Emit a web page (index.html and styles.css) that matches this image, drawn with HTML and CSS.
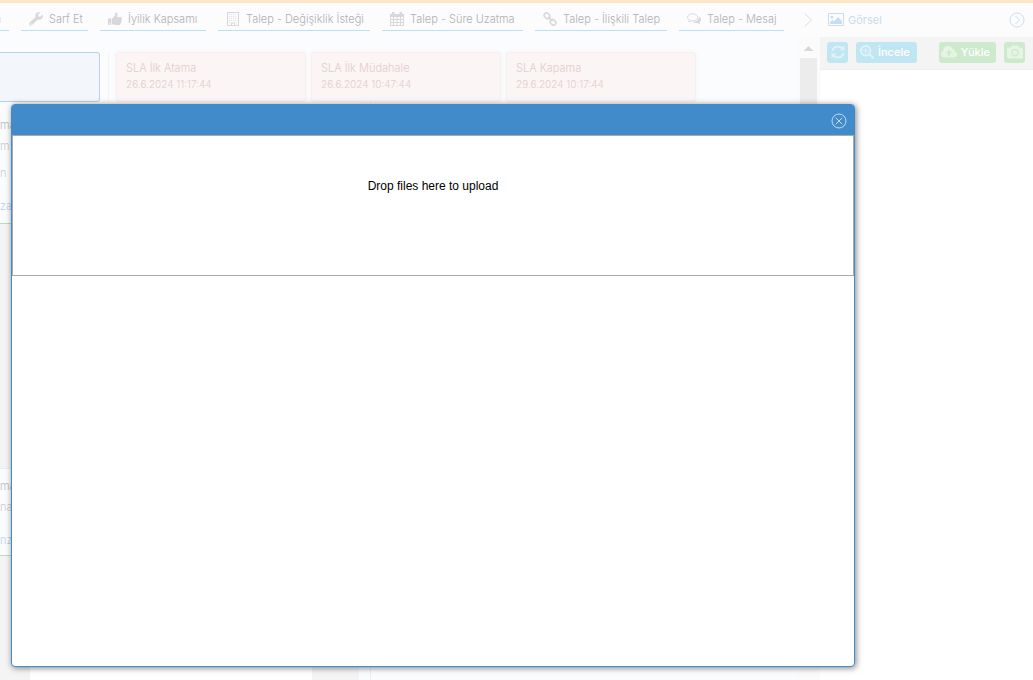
FILE: index.html
```html
<!DOCTYPE html>
<html lang="tr">
<head>
<meta charset="utf-8">
<title>Talep</title>
<link rel="stylesheet" href="styles.css">
</head>
<body>
<div class="app">
  <main class="work">
    <nav class="tabs">
      <a class="tab tab-cut" href="#">a</a>
      <a class="tab w-sarf" href="#"><svg class="icon" viewBox="0 0 14 14"><path fill-rule="evenodd" d="M13.5 2.5 11.3 4.8 9.4 4.5 9.1 2.7 11.3.5C9.6-.2 7.6.4 6.8 2c-.5 1-.5 2-.1 3L.7 10.6c-.9.9-.9 1.8-.3 2.5.8.8 1.9.7 2.6 0L8.800 7.400c1.300.6 2.900.3 3.900-.7 1.200-1.200 1.400-2.800.8-4.200zM2 11.300a.7.7 0 1 1 0 1.400.7.7 0 0 1 0-1.400z"/></svg>Sarf Et</a>
      <a class="tab w-iyilik" href="#"><svg class="icon" viewBox="0 0 14 14"><path fill-rule="evenodd" d="M0 6.500h3.300v6.300H0zM1.200 10.800v1h1v-1zM4 6.500C5.500 6 6.700 3.900 7 2.500L7.600.6C9.800.4 9.900 2.500 8.900 5h3.700c1.400.2 1.700 1.500.9 2.300.6.8.3 1.600-.3 2 .4.800.1 1.500-.6 1.900.1 1.200-.7 1.700-1.800 1.700H8.200C6.500 12.900 5.200 12.400 4 12.200z"/></svg>İyilik Kapsamı</a>
      <a class="tab w-degisiklik" href="#"><svg class="icon" viewBox="0 0 14 14"><path class="line" d="M1.500 0v13.500h11V0M1.500.5h11M5.500 13v-2h3v2"/><path class="dots" d="M3 2.500h8M3 4.500h8M3 6.500h8M3 8.500h8M3 10.500h1M10 10.500h1"/></svg>Talep - Değişiklik İsteği</a>
      <a class="tab w-sure" href="#"><svg class="icon" viewBox="0 0 14 14"><path fill-rule="evenodd" d="M0 2h2V0h2.500v2h5V0H12v2h2v12H0zM1 5v2h2V5zm3 0v2h2.500V5zm3.500 0v2H10V5zM11 5v2h2V5zM1 8v2h2V8zm3 0v2h2.500V8zm3.500 0v2H10V8zM11 8v2h2V8zM1 11v2h2v-2zm3 0v2h2.500v-2zm3.500 0v2H10v-2zm3.500 0v2h2v-2z"/></svg>Talep - Süre Uzatma</a>
      <a class="tab w-iliski" href="#"><svg class="icon" viewBox="0 0 14 14"><g class="line thick"><rect x="1" y="1.500" width="6" height="4.600" rx="2" transform="rotate(45 4 3.800)"/><rect x="7" y="8" width="6" height="4.600" rx="2" transform="rotate(45 10 10.300)"/><path d="m5 4.800 4.400 4.400"/></g></svg>Talep - İlişkili Talep</a>
      <a class="tab w-mesaj" href="#"><svg class="icon" viewBox="0 0 14 14"><path class="line" d="M5.500 1.800c-2.800 0-5 1.500-5 3.500 0 1.200.8 2.200 2 2.900L1.700 10l2.500-1.300c3.500.5 6.500-1 6.500-3.400 0-2-2.400-3.500-5.200-3.500z"/><path d="M12 4.500c2.500 1.500 2.600 4.100.3 5.700l1.200 2-3-1.300c-2 .4-3.800 0-4.900-1C9.500 9.800 12 7.800 12 4.500z"/></svg>Talep - Mesaj</a>
      <button class="next" aria-label="İleri"><svg viewBox="0 0 8 14"><path class="line" d="m.5.5 7 6.500-7 6.500"/></svg></button>
    </nav>
    <div class="scroller">
      <div class="content">
        <section class="cards">
          <div class="card-current"></div>
          <div class="card-group">
            <div class="card"><span>SLA İlk Atama</span><span class="date">26.6.2024 11:17:44</span></div>
            <div class="card"><span>SLA İlk Müdahale</span><span class="date">26.6.2024 10:47:44</span></div>
            <div class="card"><span>SLA Kapama</span><span class="date">29.6.2024 10:17:44</span></div>
          </div>
        </section>
        <div class="columns">
          <aside class="list">
            <article class="entry"><p class="strong">ma</p><p>m</p><p class="low">n</p><p class="foot">za</p></article>
            <article class="entry later"><p class="strong">ma</p><p>na</p><p class="foot">nza</p></article>
            <div class="sheet"></div>
          </aside>
          <div class="detail"></div>
        </div>
      </div>
      <div class="scrollbar"><div class="arrow"></div><div class="thumb"></div></div>
    </div>
  </main>
  <aside class="visual">
    <header class="visual-head">
      <svg class="picture" viewBox="0 0 16 14"><path class="line" d="M.5.5h15v12H.5z"/><circle cx="4" cy="4" r="1.500"/><path d="M2 11V9l2.500-2L6 8.500 10 4l4 4v3z"/></svg>
      <h2>Görsel</h2>
      <button class="collapse" aria-label="Daralt"><svg viewBox="0 0 16 16"><circle class="line" cx="8" cy="8" r="7"/><path class="line" d="m6.500 4 4 4-4 4"/></svg></button>
    </header>
    <div class="toolbar">
      <button class="btn blue square" aria-label="Yenile"><svg viewBox="0 0 14 14"><path class="arc" d="M1.500 6C2 3.500 4.200 1.500 7 1.500c2 0 3.500.8 4.600 2.200M12.500 8c-.5 2.500-2.700 4.500-5.500 4.500-2 0-3.500-.8-4.600-2.200"/><path d="M13.500.5v5h-5zM.5 13.500v-5h5z"/></svg></button>
      <button class="btn blue"><svg viewBox="0 0 14 14"><circle class="arc" cx="5.700" cy="5.700" r="4.700"/><path class="arc" d="m9.500 9.500 4 4"/><path class="line" d="M3 5.700h5.400M5.700 3v5.400"/></svg>İncele</button>
      <button class="btn green upload"><svg class="wide" viewBox="0 0 16 14"><path fill-rule="evenodd" d="M3.800 12.500C1.500 12.500 0 11 0 9c0-1.600.9-2.700 2.300-3.200C2.200 3 4.300 1 7 1c2 0 3.700 1.200 4.400 3 1.600-.1 2.600 1 2.400 2.500C15.200 7 16 8 16 9.400c0 1.800-1.400 3.100-3.200 3.100zM8 5 4.800 8.300H7V11h2V8.300h2.200z"/></svg>Yükle</button>
      <button class="btn green square" aria-label="Kamera"><svg class="wide" viewBox="0 0 16 14"><path fill-rule="evenodd" d="M0 4q0-1.500 1.500-1.500h2.700L5 .5h6l.8 2h2.700Q16 2.500 16 4v8q0 1.500-1.500 1.500h-13Q0 13.500 0 12zM8 4a3.700 3.700 0 1 0 0 7.400A3.700 3.700 0 0 0 8 4zm0 1.300a2.400 2.400 0 1 1 0 4.800 2.400 2.400 0 0 1 0-4.800z"/></svg></button>
    </div>
  </aside>
</div>
<div class="dialog" role="dialog" aria-label="Yükle">
  <header class="dialog-head">
    <button class="close" aria-label="Kapat"><svg viewBox="0 0 16 16"><circle class="line" cx="8" cy="8" r="7"/><path class="line" d="m4.800 4.800 6.400 6.400M11.200 4.800l-6.400 6.400"/></svg></button>
  </header>
  <div class="dropzone">Drop files here to upload</div>
</div>
</body>
</html>
```
FILE: styles.css
```css
* { box-sizing: border-box; }
html, body { height: 100%; }
body {
  margin: 0;
  position: relative;
  overflow: hidden;
  font: 300 11px/16px Inter, "Open Sans", sans-serif;
  color: #b5b5b5;
  background: #fff;
}
button {
  font: inherit;
  color: inherit;
  border: 0;
  padding: 0;
  background: none;
}
svg { display: block; fill: currentColor; flex: none; }
.line { fill: none; stroke: currentColor; stroke-width: 1; }
.arc { fill: none; stroke: currentColor; stroke-width: 2; }
.thick { stroke-width: 1.500; }
.dots { fill: none; stroke: currentColor; stroke-dasharray: 1 1; opacity: .7; }

.app { display: flex; height: 100%; border-top: 3px solid #fbe6c6; }
.work { flex: 1; min-width: 0; display: flex; flex-direction: column; background: #fbfcfe; }

.tabs {
  display: flex;
  gap: 12px;
  height: 34px;
  padding-top: 5px;
  background: #fcfcfd;
}
.tab {
  display: flex;
  align-items: center;
  gap: 6px;
  flex: none;
  height: 23px;
  padding-left: 8px;
  white-space: nowrap;
  text-decoration: none;
  color: #b0b0b2;
  border-bottom: 1px solid #bcdff3;
}
.icon { width: 14px; height: 14px; color: #d8d8da; }
.tab-cut { width: 9px; padding: 0 8px 0 0; justify-content: flex-end; color: #c9a8dc; }
.w-sarf { width: 67px; }
.w-iyilik { width: 106px; }
.w-degisiklik { width: 152px; }
.w-sure { width: 141px; }
.w-iliski { width: 132px; }
.w-mesaj { width: 105px; }
.next { height: 23px; margin-left: 8px; color: #dcdcdc; }
.next svg { width: 8px; height: 14px; }

.scroller { flex: 1; min-height: 0; display: flex; }
.content { flex: 1; min-width: 0; display: flex; flex-direction: column; }
.cards { display: flex; gap: 8px; padding-top: 15px; }
.card-current {
  width: 100px;
  height: 50px;
  background: #f3f6fb;
  border: 1px solid #b9d3e6;
  border-left: 0;
  border-radius: 0 3px 3px 0;
}
.card-group {
  display: flex;
  gap: 5px;
  padding-left: 7px;
  border-left: 1px solid #f3f4f6;
}
.card {
  width: 190px;
  height: 50px;
  padding: 7px 9px;
  display: flex;
  flex-direction: column;
  color: #e4cccc;
  background: #fbf5f5;
  border: 1px solid #f9efef;
  border-radius: 3px;
  box-shadow: 0 0 4px #f4f4f6;
}
.date { font-size: 10px; }

.columns { flex: 1; display: flex; min-height: 0; }
.list { width: 359px; background: #f4f4f4; display: flex; flex-direction: column; }
.entry {
  height: 122px;
  padding-top: 15px;
  background: #fbfcfe;
  border-bottom: 1px solid #b9deba;
}
.entry p { margin: 0 0 5px; color: #ccc; }
.entry .strong { color: #bbb; }
.entry .low { margin-top: 11px; }
.entry .foot { margin-top: 17px; color: #bcd0ea; }
.later { height: 88px; margin-top: 244px; padding-top: 9px; border-top: 1px solid #ececec; }
.sheet { flex: 1; margin: 20px 47px 0 30px; background: #fff; }
.detail { flex: 1; margin-left: 11px; border-left: 1px solid #eee; }

.scrollbar { width: 22px; padding: 9px 3px 0 2px; background: #fbfbfb; }
.arrow {
  width: 10px;
  height: 5px;
  margin: 0 auto 7px;
  background: #d8d8d8;
  clip-path: polygon(50% 0, 100% 100%, 0 100%);
}
.thumb { height: 400px; background: #ececec; }

.visual { width: 213px; background: #fff; }
.visual-head {
  display: flex;
  align-items: center;
  gap: 4px;
  height: 34px;
  padding: 0 8px;
  color: #c9ddee;
  background: #fcfcfc;
}
.visual-head h2 { flex: 1; margin: 0; font-size: 11px; font-weight: 400; }
.picture { width: 16px; height: 14px; }
.collapse svg { width: 16px; height: 16px; }
.toolbar {
  display: flex;
  align-items: center;
  gap: 8px;
  height: 33px;
  padding: 0 8px 2px 7px;
  background: #f4f4f4;
  border-bottom: 1px solid #eee;
}
.btn {
  display: flex;
  align-items: center;
  gap: 4px;
  height: 21px;
  padding: 0 7px 0 4px;
  border-radius: 3px;
  font-weight: 500;
  color: #fff;
}
.btn svg { width: 14px; height: 14px; opacity: .5; }
.btn .wide { width: 16px; }
.square { width: 21px; padding: 0; justify-content: center; }
.blue { background: #bfe6f2; }
.green { background: #cdeacd; }
.upload { margin-left: auto; padding: 0 6px 0 2px; }

.dialog {
  position: absolute;
  top: 104px;
  left: 11px;
  right: 178px;
  bottom: 13px;
  background: #fff;
  border: 1px solid #428bca;
  border-radius: 4px;
  box-shadow: 1px 1px 6px rgba(0, 0, 0, .5);
}
.dialog-head {
  display: flex;
  align-items: center;
  justify-content: flex-end;
  height: 30px;
  padding: 2px 7px 0 0;
  background: #428bca;
  border-radius: 2px 2px 0 0;
}
.close { color: #c5dcef; }
.close svg { width: 16px; height: 16px; }
.dropzone {
  height: 141px;
  padding-top: 42px;
  border: 1px solid #aaa;
  text-align: center;
  font: 12px/16px "Liberation Sans", Arial, sans-serif;
  color: #000;
}
```
